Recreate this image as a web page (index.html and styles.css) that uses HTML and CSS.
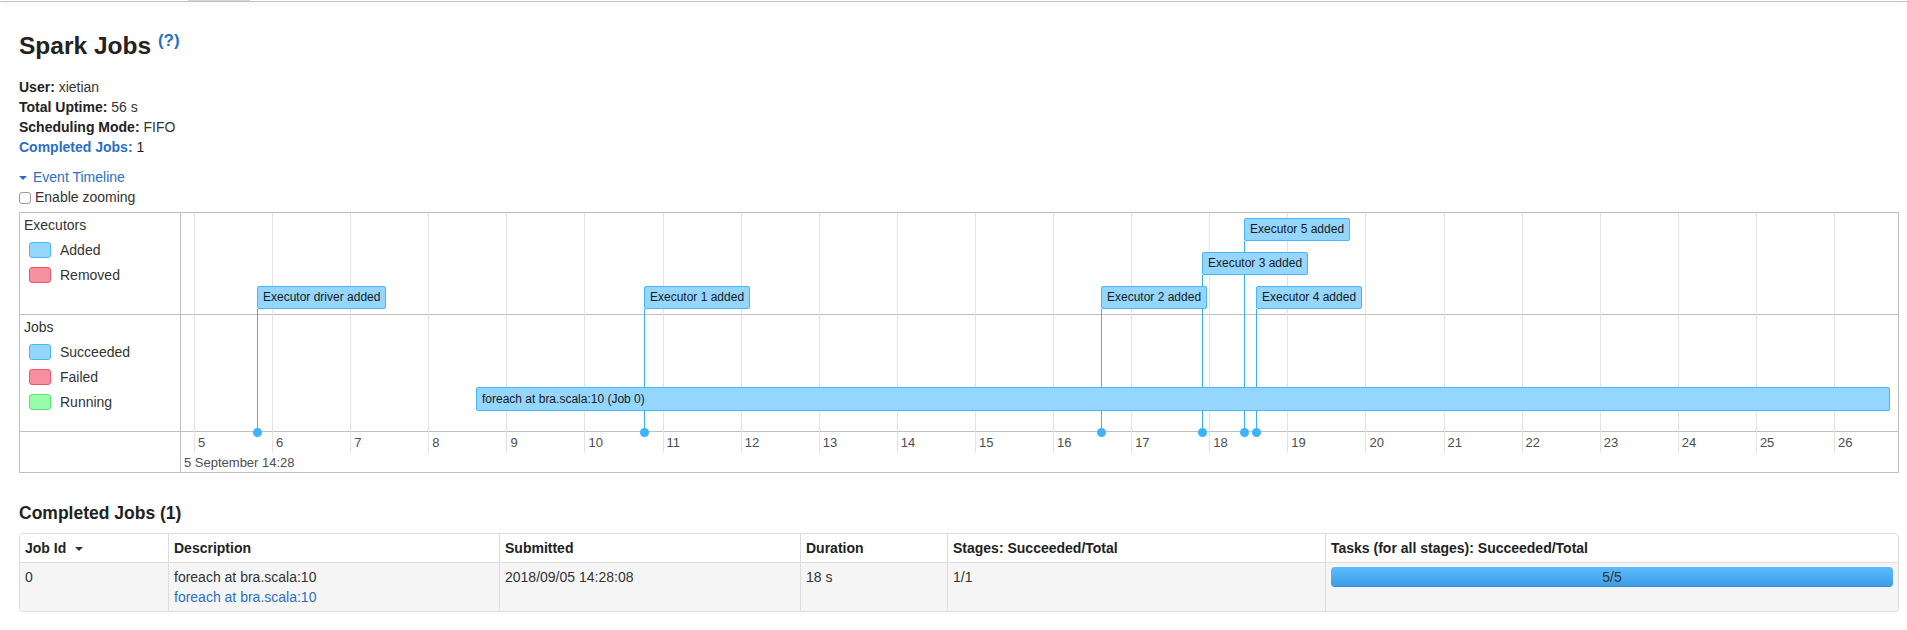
FILE: index.html
```html
<!DOCTYPE html>
<html lang="en">
<head>
<meta charset="utf-8">
<title>Spark Jobs</title>
<link rel="stylesheet" href="styles.css">
</head>
<body>
<div class="topbar"><span class="topbar-tab"></span></div>
<div class="container">
  <h3 class="page-title">Spark Jobs <sup class="help"><a href="#">(?)</a></sup></h3>
  <ul class="summary">
    <li><strong>User:</strong> xietian</li>
    <li><strong>Total Uptime:</strong> 56 s</li>
    <li><strong>Scheduling Mode:</strong> FIFO</li>
    <li><a href="#completed"><strong>Completed Jobs:</strong></a> <span class="count">1</span></li>
  </ul>
  <a class="timeline-toggle" href="#"><span class="arrow-open"></span>Event Timeline</a>
  <label class="zoom-toggle"><input type="checkbox" class="zoom-cb">Enable zooming</label>

  <div class="timeline">
    <div class="legend-cell legend-exec">
      <div class="legend-title">Executors</div>
      <div class="legend-row"><span class="swatch swatch-added"></span>Added</div>
      <div class="legend-row"><span class="swatch swatch-removed"></span>Removed</div>
    </div>
    <div class="band band-exec"></div>
    <div class="legend-cell legend-jobs">
      <div class="legend-title">Jobs</div>
      <div class="legend-row"><span class="swatch swatch-succeeded"></span>Succeeded</div>
      <div class="legend-row"><span class="swatch swatch-failed"></span>Failed</div>
      <div class="legend-row"><span class="swatch swatch-running"></span>Running</div>
    </div>
    <div class="band band-jobs"></div>
    <div class="legend-cell legend-axis"></div>
    <div class="band band-axis"></div>

    <div class="canvas">
      <div class="ticks">
        <div class="tick"><span>5</span></div>
        <div class="tick"><span>6</span></div>
        <div class="tick"><span>7</span></div>
        <div class="tick"><span>8</span></div>
        <div class="tick"><span>9</span></div>
        <div class="tick"><span>10</span></div>
        <div class="tick"><span>11</span></div>
        <div class="tick"><span>12</span></div>
        <div class="tick"><span>13</span></div>
        <div class="tick"><span>14</span></div>
        <div class="tick"><span>15</span></div>
        <div class="tick"><span>16</span></div>
        <div class="tick"><span>17</span></div>
        <div class="tick"><span>18</span></div>
        <div class="tick"><span>19</span></div>
        <div class="tick"><span>20</span></div>
        <div class="tick"><span>21</span></div>
        <div class="tick"><span>22</span></div>
        <div class="tick"><span>23</span></div>
        <div class="tick"><span>24</span></div>
        <div class="tick"><span>25</span></div>
        <div class="tick"><span>26</span></div>
      </div>
      <div class="major-label">5 September 14:28</div>

      <div class="evt" style="left:76px;top:73px"><div class="evt-box">Executor driver added</div><div class="evt-line"></div><div class="evt-dot"></div></div>
      <div class="evt" style="left:463px;top:73px"><div class="evt-box">Executor 1 added</div><div class="evt-line"></div><div class="evt-dot"></div></div>
      <div class="evt" style="left:920px;top:73px"><div class="evt-box">Executor 2 added</div><div class="evt-line"></div><div class="evt-dot"></div></div>
      <div class="evt" style="left:1021px;top:39px"><div class="evt-box">Executor 3 added</div><div class="evt-line"></div><div class="evt-dot"></div></div>
      <div class="evt" style="left:1063px;top:5px"><div class="evt-box">Executor 5 added</div><div class="evt-line"></div><div class="evt-dot"></div></div>
      <div class="evt" style="left:1075px;top:73px"><div class="evt-box">Executor 4 added</div><div class="evt-line"></div><div class="evt-dot"></div></div>

      <div class="job" style="left:295px;top:174px;width:1414px">foreach at bra.scala:10 (Job 0)</div>
    </div>
  </div>

  <h4 class="section-title" id="completed">Completed Jobs (1)</h4>
  <table class="jobs-table">
    <thead>
      <tr>
        <th class="col-id">Job Id<span class="caret"></span></th>
        <th class="col-desc">Description</th>
        <th class="col-sub">Submitted</th>
        <th class="col-dur">Duration</th>
        <th class="col-stages">Stages: Succeeded/Total</th>
        <th class="col-tasks">Tasks (for all stages): Succeeded/Total</th>
      </tr>
    </thead>
    <tbody>
      <tr>
        <td>0</td>
        <td><div class="desc-text">foreach at bra.scala:10</div><a href="#" class="name-link">foreach at bra.scala:10</a></td>
        <td>2018/09/05 14:28:08</td>
        <td>18 s</td>
        <td>1/1</td>
        <td><div class="progress"><span class="progress-label">5/5</span><div class="progress-bar" style="width:100%"></div></div></td>
      </tr>
    </tbody>
  </table>
</div>
</body>
</html>
```
FILE: styles.css
```css
* { box-sizing: border-box; }
html, body { margin: 0; background: #fff; }
body {
  font-family: "Liberation Sans", Arial, Helvetica, sans-serif;
  font-size: 14px;
  line-height: 20px;
  color: #333;
}
a { color: #2a6fc4; text-decoration: none; }

.topbar {
  height: 2px;
  border-bottom: 1px solid #c2c2c2;
  box-shadow: 0 1px 7px rgba(0, 0, 0, 0.09);
}
.topbar-tab {
  display: block;
  margin-left: 188px;
  width: 62px;
  height: 1px;
  background: #d6d6d6;
}

.container { padding: 0 8px 0 19px; }

.page-title {
  font-size: 24.5px;
  line-height: 40px;
  margin: 24px 0 11px;
  color: #222;
  font-weight: bold;
}
.help {
  font-size: 17px;
  line-height: 0;
  vertical-align: 8px;
}

.summary { list-style: none; margin: 0; padding: 0; }
.summary strong { color: #222; }
.summary a strong { color: #2a6fc4; }
.count { color: #222; }

.timeline-toggle { display: block; margin-top: 10px; }
.arrow-open {
  display: inline-block;
  width: 0;
  height: 0;
  border-left: 4px solid transparent;
  border-right: 4px solid transparent;
  border-top: 4px solid #2a6fc4;
  vertical-align: middle;
  margin-right: 6px;
}

.zoom-toggle {
  display: flex;
  align-items: center;
  height: 20px;
}
.zoom-cb {
  appearance: none;
  -webkit-appearance: none;
  width: 12px;
  height: 12px;
  margin: 1px 4px 0 0;
  border: 1px solid #9a9a9a;
  border-radius: 3px;
  background: #fff;
}

/* Timeline */
.timeline {
  margin-top: 5px;
  display: grid;
  grid-template-columns: 161px 1fr;
  grid-template-rows: 102px 117px 40px;
  border: 1px solid #bfbfbf;
  color: #333;
}
.legend-cell {
  grid-column: 1;
  border-right: 1px solid #bfbfbf;
  padding: 2px 0 0 4px;
}
.band { grid-column: 2; }
.legend-exec, .band-exec { grid-row: 1; }
.legend-jobs, .band-jobs { grid-row: 2; }
.legend-axis, .band-axis { grid-row: 3; }
.legend-exec, .legend-jobs, .band-exec, .band-jobs { border-bottom: 1px solid #bfbfbf; }
.legend-title { margin-bottom: 2px; }
.legend-row {
  display: flex;
  align-items: center;
  height: 25px;
}
.swatch {
  width: 22px;
  height: 16px;
  margin: 0 9px 0 5px;
  border-radius: 3px;
  border: 1px solid;
}
.swatch-added, .swatch-succeeded { background: #94d6fe; border-color: #49b9f6; }
.swatch-removed, .swatch-failed { background: #f7909e; border-color: #ec5470; }
.swatch-running { background: #97fdaa; border-color: #5fe07d; }

.canvas {
  grid-column: 2;
  grid-row: 1 / 4;
  position: relative;
  z-index: 0;
  overflow: hidden;
}
.ticks {
  position: absolute;
  left: 13px;
  top: 0;
  display: flex;
}
.tick {
  flex: none;
  width: 78.1px;
  height: 240px;
  border-left: 1px solid #e3e3e3;
  display: flex;
  align-items: flex-end;
  padding: 0 0 3px 3px;
  font-size: 13px;
  line-height: 15px;
  color: #4d4d4d;
}
.major-label {
  position: absolute;
  left: 3px;
  top: 242px;
  font-size: 13px;
  line-height: 15px;
  color: #4d4d4d;
  white-space: nowrap;
}

.evt {
  position: absolute;
  bottom: 40px;
  display: flex;
  flex-direction: column;
  align-items: flex-start;
}
.evt-box {
  position: relative;
  z-index: 2;
  background: #94d6fe;
  border: 1px solid #45b7f6;
  border-radius: 2px;
  padding: 3px 5px;
  font-size: 12px;
  line-height: 15px;
  color: #1a1a1a;
  white-space: nowrap;
}
.evt-line {
  position: relative;
  z-index: 1;
  flex: 1;
  width: 1px;
  background: #3eb1f3;
}
.evt-dot {
  position: absolute;
  z-index: 4;
  left: -4px;
  bottom: -4.5px;
  width: 9px;
  height: 9px;
  border-radius: 50%;
  background: #3eb4f8;
}
.job {
  position: absolute;
  z-index: 3;
  height: 24px;
  background: #94d6fe;
  border: 1px solid #45b7f6;
  border-radius: 2px;
  padding: 4px 5px 3px;
  font-size: 12px;
  line-height: 15px;
  color: #1a1a1a;
  white-space: nowrap;
  overflow: hidden;
}

/* Completed jobs */
.section-title {
  font-size: 17.5px;
  line-height: 20px;
  margin: 30px 0 10px;
  color: #222;
  font-weight: bold;
}
.jobs-table {
  width: 100%;
  table-layout: fixed;
  border-collapse: separate;
  border-spacing: 0;
  border: 1px solid #ddd;
  border-radius: 4px;
}
.jobs-table th, .jobs-table td {
  padding: 4px 5px;
  text-align: left;
  vertical-align: top;
  border-left: 1px solid #ddd;
  line-height: 20px;
}
.jobs-table th:first-child, .jobs-table td:first-child { border-left: 0; }
.jobs-table th { font-weight: bold; color: #222; background: #fff; }
.jobs-table th:first-child { border-top-left-radius: 4px; }
.jobs-table th:last-child { border-top-right-radius: 4px; }
.jobs-table td { border-top: 1px solid #ddd; background: #f5f5f5; color: #333; }
.jobs-table td:first-child { border-bottom-left-radius: 4px; }
.jobs-table td:last-child { border-bottom-right-radius: 4px; }
.col-id { width: 148px; }
.col-desc { width: 331px; }
.col-sub { width: 301px; }
.col-dur { width: 147px; }
.col-stages { width: 378px; }

.caret {
  display: inline-block;
  width: 0;
  height: 0;
  margin-left: 9px;
  border-left: 4px solid transparent;
  border-right: 4px solid transparent;
  border-top: 4px solid #333;
  vertical-align: middle;
}

.progress {
  position: relative;
  height: 20px;
  border-radius: 4px;
  overflow: hidden;
  background: #f7f7f7;
}
.progress-bar {
  height: 100%;
  background-image: linear-gradient(to bottom, #5abdfd, #3d9be6);
  box-shadow: inset 0 -1px 0 rgba(0, 0, 0, 0.08);
}
.progress-label {
  position: absolute;
  left: 0;
  right: 0;
  top: 0;
  z-index: 1;
  text-align: center;
  line-height: 20px;
  color: #333;
}
```
